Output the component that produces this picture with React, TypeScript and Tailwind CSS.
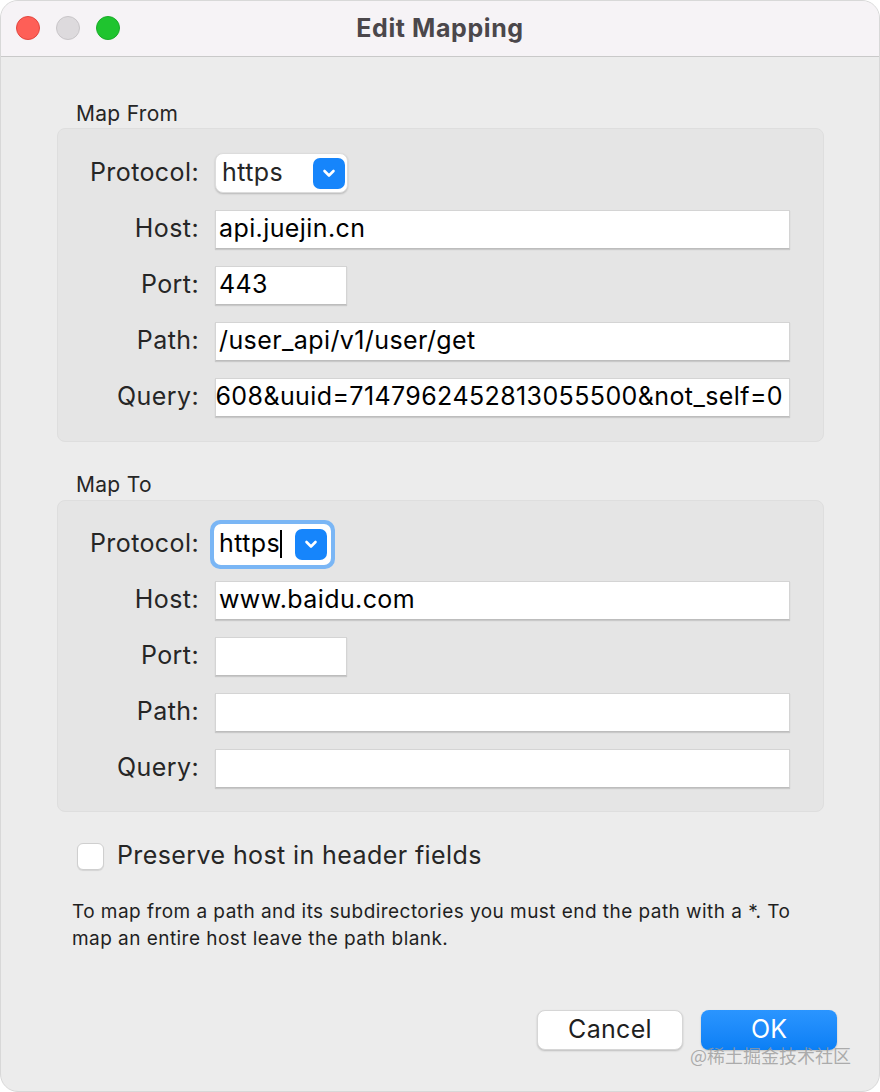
type RowProps = {
  label: string;
  children: React.ReactNode;
};

function Row({ label, children }: RowProps) {
  return (
    <div className="flex h-[56px] items-center">
      <div className="w-[141px] text-right text-[25px] tracking-[0.4px] text-[#262626]">{label}</div>
      <div className="ml-[16px] flex items-center">{children}</div>
    </div>
  );
}

function TextBox({ value = "", width = "w-[575px]", scrolled = false }: { value?: string; width?: string; scrolled?: boolean }) {
  return (
    <div
      className={`flex h-[39px] items-center overflow-hidden whitespace-nowrap border border-[#d4d4d4] border-b-[#bdbdbd] bg-white text-[25px] tracking-[0.4px] text-black shadow-[0_1px_1px_rgba(0,0,0,0.12)] ${width} ${
        scrolled ? "justify-end pr-[6px]" : "pl-[3px]"
      }`}
    >
      {value}
    </div>
  );
}

function Chevron() {
  return (
    <svg width="18" height="18" viewBox="0 0 18 18" fill="none">
      <path d="M4.5 7 9 11.5 13.5 7" stroke="white" strokeWidth="2.6" strokeLinecap="round" strokeLinejoin="round" />
    </svg>
  );
}

function Select({ focused = false }: { focused?: boolean }) {
  if (focused) {
    return (
      <div className="-ml-[5px] rounded-[10px] bg-[#7ab6f5] p-[4px]">
        <div className="flex h-[41px] w-[117px] items-center rounded-[7px] bg-white pl-[5px] pr-[4px] text-[25px] tracking-[0.4px] text-black">
          <span>https</span>
          <span className="h-[28px] w-[2px] bg-black" />
          <div className="ml-auto flex h-[31px] w-[32px] items-center justify-center rounded-[7px] bg-[#1685fb]">
            <Chevron />
          </div>
        </div>
      </div>
    );
  }
  return (
    <div className="flex h-[40px] w-[133px] items-center rounded-[8px] border border-[#dcdcdc] bg-white pl-[6px] pr-[2px] text-[25px] tracking-[0.4px] text-[#262626] shadow-[0_1px_2px_rgba(0,0,0,0.2)]">
      <span>https</span>
      <div className="ml-auto flex h-[31px] w-[32px] items-center justify-center rounded-[7px] bg-[#1685fb]">
        <Chevron />
      </div>
    </div>
  );
}

export default function App() {
  return (
    <div className="h-[1092px] w-[880px] bg-white" style={{ fontFamily: "Inter, 'Noto Sans', sans-serif" }}>
      <div className="relative flex h-full w-full flex-col overflow-hidden rounded-[18px] border border-[#d8d8d8] bg-[#ececec]">
        {/* title bar */}
        <div className="relative flex h-[56px] shrink-0 items-center justify-center border-b border-[#c9c9c9] bg-[#f6f3f6]">
          <div className="absolute left-[15px] top-[15px] flex gap-[16px]">
            <span className="h-[24px] w-[24px] rounded-full border border-[#e2463f] bg-[#fe5f57]" />
            <span className="h-[24px] w-[24px] rounded-full border border-[#c8c5c8] bg-[#dddadd]" />
            <span className="h-[24px] w-[24px] rounded-full border border-[#1aab29] bg-[#1fc42f]" />
          </div>
          <span className="text-[25px] font-bold tracking-[0.6px] text-[#4b474b]">Edit Mapping</span>
        </div>

        <div className="flex flex-col px-[56px]">
          <div className="ml-[19px] mt-[44px] h-[26px] text-[21px] leading-[26px] tracking-[0.3px] text-[#262626]">Map From</div>
          <div className="mt-[1px] w-[767px] rounded-[8px] border border-[#dedede] bg-[#e5e5e5] pb-[16px] pt-[16px]">
            <Row label="Protocol:">
              <Select />
            </Row>
            <Row label="Host:">
              <TextBox value="api.juejin.cn" />
            </Row>
            <Row label="Port:">
              <TextBox value="443" width="w-[132px]" />
            </Row>
            <Row label="Path:">
              <TextBox value="/user_api/v1/user/get" />
            </Row>
            <Row label="Query:">
              <TextBox value="608&uuid=7147962452813055500&not_self=0" scrolled />
            </Row>
          </div>

          <div className="ml-[19px] mt-[30px] h-[26px] text-[21px] leading-[26px] tracking-[0.3px] text-[#262626]">Map To</div>
          <div className="mt-[2px] w-[767px] rounded-[8px] border border-[#dedede] bg-[#e5e5e5] pb-[15px] pt-[15px]">
            <Row label="Protocol:">
              <Select focused />
            </Row>
            <Row label="Host:">
              <TextBox value="www.baidu.com" />
            </Row>
            <Row label="Port:">
              <TextBox width="w-[132px]" />
            </Row>
            <Row label="Path:">
              <TextBox />
            </Row>
            <Row label="Query:">
              <TextBox />
            </Row>
          </div>

          <div className="ml-[20px] mt-[30px] flex h-[28px] items-center">
            <span className="h-[27px] w-[27px] rounded-[6px] border border-[#cfcfcf] bg-white shadow-[0_1px_1px_rgba(0,0,0,0.1)]" />
            <span className="ml-[13px] text-[25px] tracking-[0.4px] text-[#262626]">Preserve host in header fields</span>
          </div>

          <p className="ml-[15px] mt-[28px] w-[745px] text-[19px] leading-[27px] tracking-[0.45px] text-[#1f1f1f]">
            To map from a path and its subdirectories you must end the path with a *. To map an entire host leave the path blank.
          </p>

          <div className="mr-[-14px] mt-[58px] flex justify-end gap-[18px]">
            <button
              type="button"
              className="h-[40px] w-[146px] rounded-[8px] border border-[#d6d6d6] bg-white text-[25px] tracking-[0.3px] text-[#1f1f1f] shadow-[0_1px_2px_rgba(0,0,0,0.2)]"
            >
              Cancel
            </button>
            <button
              type="button"
              className="h-[40px] w-[136px] rounded-[8px] bg-gradient-to-b from-[#2a95ff] to-[#0a7ff5] text-[25px] text-white shadow-[0_1px_2px_rgba(0,0,0,0.2)]"
            >
              OK
            </button>
          </div>
        </div>

        <div
          className="absolute left-[689px] top-[1041px] text-[18px] text-[#9a9a9a]/80"
          style={{ fontFamily: "'Noto Sans CJK SC', sans-serif" }}
        >
          @稀土掘金技术社区
        </div>
      </div>
    </div>
  );
}
